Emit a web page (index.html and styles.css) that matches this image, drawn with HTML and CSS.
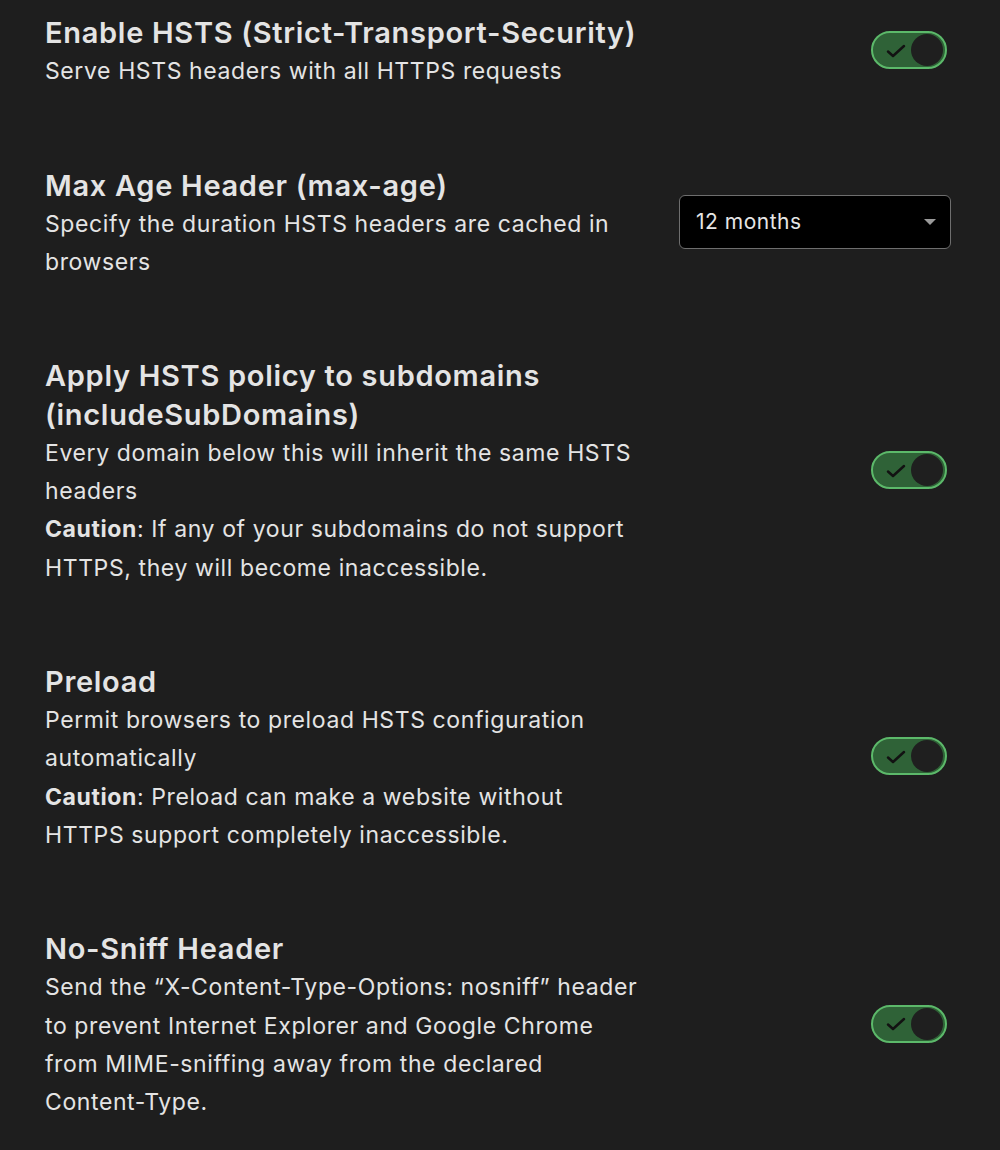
FILE: index.html
```html
<!DOCTYPE html>
<html>
<head>
<meta charset="utf-8">
<link rel="stylesheet" href="styles.css">
</head>
<body>
<div class="settings">
  <div class="row">
    <div class="text">
      <div class="title">Enable HSTS (Strict-Transport-Security)</div>
      <div class="desc">Serve HSTS headers with all HTTPS requests</div>
    </div>
    <div class="control">
      <div class="toggle"><svg class="check" viewBox="0 0 20 14" width="20" height="14"><path d="M2 7.5 L7 12 L18 2" fill="none" stroke="#121212" stroke-width="2.5" stroke-linecap="round" stroke-linejoin="round"/></svg><span class="knob"></span></div>
    </div>
  </div>
  <div class="row">
    <div class="text">
      <div class="title">Max Age Header (max-age)</div>
      <div class="desc">Specify the duration HSTS headers are cached in browsers</div>
    </div>
    <div class="control">
      <div class="select"><span>12 months</span><span class="arrow"></span></div>
    </div>
  </div>
  <div class="row">
    <div class="text">
      <div class="title">Apply HSTS policy to subdomains (includeSubDomains)</div>
      <div class="desc">Every domain below this will inherit the same HSTS headers</div>
      <div class="desc"><b>Caution</b>: If any of your subdomains do not support HTTPS, they will become inaccessible.</div>
    </div>
    <div class="control">
      <div class="toggle"><svg class="check" viewBox="0 0 20 14" width="20" height="14"><path d="M2 7.5 L7 12 L18 2" fill="none" stroke="#121212" stroke-width="2.5" stroke-linecap="round" stroke-linejoin="round"/></svg><span class="knob"></span></div>
    </div>
  </div>
  <div class="row">
    <div class="text">
      <div class="title">Preload</div>
      <div class="desc">Permit browsers to preload HSTS configuration automatically</div>
      <div class="desc"><b>Caution</b>: Preload can make a website without HTTPS support completely inaccessible.</div>
    </div>
    <div class="control">
      <div class="toggle"><svg class="check" viewBox="0 0 20 14" width="20" height="14"><path d="M2 7.5 L7 12 L18 2" fill="none" stroke="#121212" stroke-width="2.5" stroke-linecap="round" stroke-linejoin="round"/></svg><span class="knob"></span></div>
    </div>
  </div>
  <div class="row">
    <div class="text">
      <div class="title">No-Sniff Header</div>
      <div class="desc">Send the “X-Content-Type-Options: nosniff” header to prevent Internet Explorer and Google Chrome from MIME-sniffing away from the declared Content-Type.</div>
    </div>
    <div class="control">
      <div class="toggle"><svg class="check" viewBox="0 0 20 14" width="20" height="14"><path d="M2 7.5 L7 12 L18 2" fill="none" stroke="#121212" stroke-width="2.5" stroke-linecap="round" stroke-linejoin="round"/></svg><span class="knob"></span></div>
    </div>
  </div>
</div>
</body>
</html>
```

FILE: styles.css
```css
html, body {
  margin: 0;
  background: #1e1e1e;
}
body {
  font-family: Inter, "Noto Sans", sans-serif;
  color: #e4e4e4;
  width: 1000px;
  height: 1150px;
  overflow: hidden;
}
.settings {
  padding: 14px 49px 0 45px;
  display: flex;
  flex-direction: column;
  gap: 76px;
}
.row {
  display: flex;
  align-items: center;
  justify-content: space-between;
}
.text {
  width: 600px;
}
.title {
  font-size: 29px;
  font-weight: 600;
  line-height: 38.25px;
  letter-spacing: 0.7px;
}
.desc {
  font-size: 23px;
  line-height: 38.25px;
  letter-spacing: 0.6px;
}
.desc b {
  font-weight: 700;
}
.control {
  display: flex;
  justify-content: flex-end;
  margin-top: -4px;
}
.toggle {
  width: 76px;
  height: 38px;
  margin-right: 4px;
  box-sizing: border-box;
  border: 2px solid #5cb96a;
  border-radius: 19px;
  background: #2f6237;
  display: flex;
  align-items: center;
  padding: 0 2px 0 12px;
  justify-content: space-between;
}
.check {
  display: block;
  margin-top: 1px;
  margin-left: 1px;
}
.knob {
  width: 32px;
  height: 32px;
  border-radius: 50%;
  background: #1f1f1f;
}
.select {
  width: 272px;
  height: 54px;
  box-sizing: border-box;
  background: #000;
  border: 1px solid #6e6e6e;
  border-radius: 6px;
  display: flex;
  align-items: center;
  justify-content: space-between;
  padding: 0 14px 0 16px;
  font-size: 21px;
  letter-spacing: 0.5px;
  color: #e6e6e6;
}
.arrow {
  width: 0;
  height: 0;
  border-left: 6px solid transparent;
  border-right: 6px solid transparent;
  border-top: 6px solid #9a9a9a;
}
```
